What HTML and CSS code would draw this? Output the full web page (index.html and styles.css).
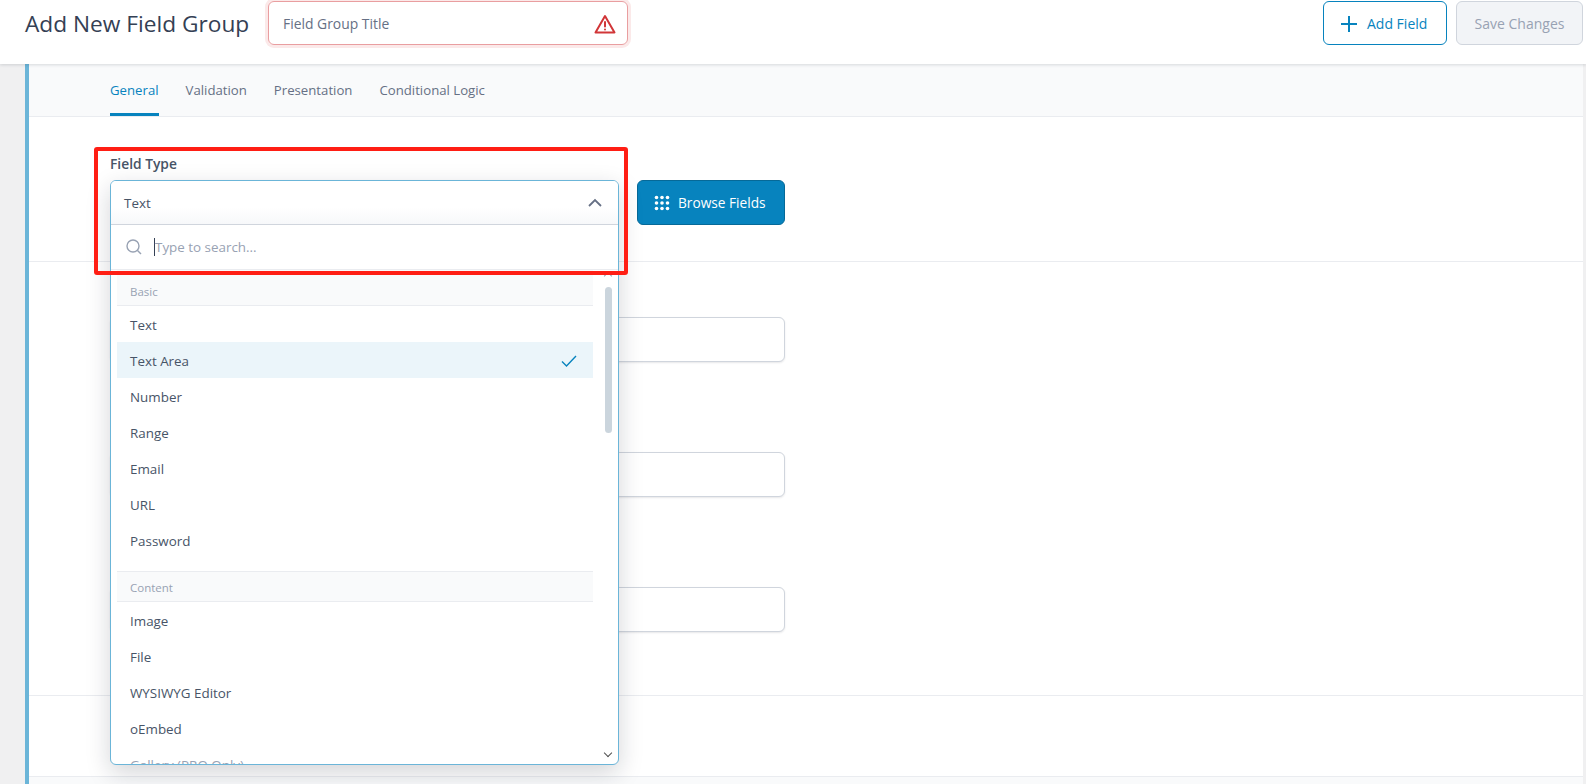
FILE: index.html
```html
<!DOCTYPE html>
<html lang="en">
<head>
    <meta charset="UTF-8">
    <title>Add New Field Group</title>
    <link rel="stylesheet" href="styles.css">
</head>
<body>
    <header class="topbar">
        <h1 class="page-title">Add New Field Group</h1>
        <div class="title-input">
            <span>Field Group Title</span>
            <svg width="22" height="20" viewBox="0 0 22 20" fill="none" stroke="#d13638" stroke-width="2" stroke-linejoin="round" stroke-linecap="round"><path d="M11 2 L20.5 18.5 H1.5 Z"/><path d="M11 8 V12.5"/><path d="M11 15.4 V15.5"/></svg>
        </div>
        <div class="top-actions">
            <button class="btn-outline"><svg width="16" height="16" viewBox="0 0 16 16" stroke="#0783be" stroke-width="2"><path d="M8 0 V16 M0 8 H16"/></svg>Add Field</button>
            <button class="btn-disabled">Save Changes</button>
        </div>
    </header>
    <div class="wrap">
        <div class="panel">
            <nav class="tabs">
                <a class="active">General</a>
                <a>Validation</a>
                <a>Presentation</a>
                <a>Conditional Logic</a>
            </nav>
            <section class="section type-section">
                <label class="field-label">Field Type</label>
                <div class="type-row">
                    <div class="fake-select"></div>
                    <button class="btn-browse">
                        <svg width="16" height="16" viewBox="0 0 16 16" fill="#fff"><circle cx="2.5" cy="2.5" r="1.8"/><circle cx="8" cy="2.5" r="1.8"/><circle cx="13.5" cy="2.5" r="1.8"/><circle cx="2.5" cy="8" r="1.8"/><circle cx="8" cy="8" r="1.8"/><circle cx="13.5" cy="8" r="1.8"/><circle cx="2.5" cy="13.5" r="1.8"/><circle cx="8" cy="13.5" r="1.8"/><circle cx="13.5" cy="13.5" r="1.8"/></svg>
                        Browse Fields
                    </button>
                </div>
            </section>
            <section class="section inputs-section">
                <div class="input-box"></div>
                <div class="input-box"></div>
                <div class="input-box"></div>
            </section>
            <section class="section last-section"></section>
            <div class="panel-foot"></div>
        </div>
    </div>

    <div class="dropdown">
        <div class="dd-head">
            <span>Text</span>
            <svg width="14" height="9" viewBox="0 0 14 9" fill="none" stroke="#667085" stroke-width="1.8"><path d="M1 8 L7 2 L13 8"/></svg>
        </div>
        <div class="dd-search">
            <svg width="16" height="16" viewBox="0 0 16 16" fill="none" stroke="#98a2b3" stroke-width="1.4"><circle cx="7" cy="7" r="6"/><path d="M11.5 11.5 L15 15"/></svg>
            <i class="caret"></i>
            <span>Type to search...</span>
        </div>
        <div class="dd-list">
            <div class="group-name">Basic</div>
            <div class="opt">Text</div>
            <div class="opt selected">Text Area
                <svg width="16" height="12" viewBox="0 0 16 12" fill="none" stroke="#0783be" stroke-width="1.4"><path d="M1 6.5 L5.5 11 L15 1"/></svg>
            </div>
            <div class="opt">Number</div>
            <div class="opt">Range</div>
            <div class="opt">Email</div>
            <div class="opt">URL</div>
            <div class="opt">Password</div>
            <div class="group-name second">Content</div>
            <div class="opt">Image</div>
            <div class="opt">File</div>
            <div class="opt">WYSIWYG Editor</div>
            <div class="opt">oEmbed</div>
            <div class="opt muted">Gallery (PRO Only)</div>
            <div class="scroll-up"></div>
            <div class="scroll-thumb"></div>
            <div class="scroll-down"></div>
        </div>
    </div>
    <div class="red-box"></div>
</body>
</html>
```
FILE: styles.css
```css
* {
    box-sizing: border-box;
}

html, body {
    height: 100%;
}

body {
    margin: 0;
    overflow: hidden;
    background-color: #f0f0f1;
    font-family: "Open Sans", "Noto Sans", sans-serif;
    font-size: 13.4px;
    color: #475467;
    position: relative;
}

.topbar {
    height: 64px;
    background-color: #fff;
    display: flex;
    align-items: flex-start;
    padding: 1px 3px 0 25px;
    box-shadow: 0 1px 3px rgba(16, 24, 40, 0.15);
    position: relative;
    z-index: 2;
}

.page-title {
    width: 243px;
    margin: 7px 0 0 0;
    font-size: 22.7px;
    font-weight: 400;
    line-height: 32px;
    color: #344054;
    white-space: nowrap;
}

.title-input {
    width: 360px;
    height: 44px;
    padding: 1px 11px 0 14px;
    display: flex;
    align-items: center;
    justify-content: space-between;
    border: 1px solid #e99ea0;
    border-radius: 6px;
    box-shadow: 0 0 0 3px #fbe9e9;
    font-size: 13.9px;
    color: #667085;
}

.top-actions {
    margin-left: auto;
    display: flex;
    gap: 9px;
}

.btn-outline, .btn-disabled, .btn-browse {
    height: 44px;
    border-radius: 6px;
    font-family: inherit;
    font-size: 14px;
    display: flex;
    align-items: center;
}

.btn-outline {
    width: 124px;
    padding: 1px 0 0 17px;
    gap: 10px;
    color: #0783be;
    background-color: #fff;
    border: 1px solid #0783be;
}

.btn-disabled {
    width: 127px;
    justify-content: center;
    padding: 1px 0 0 0;
    color: #98a2b3;
    background-color: #f2f4f7;
    border: 1px solid #d0d5dd;
}

.wrap {
    padding: 0 3px 0 25px;
    height: 720px;
}

.panel {
    height: 100%;
    background-color: #fff;
    border-left: 4px solid #6bb5d8;
    display: flex;
    flex-direction: column;
}

.tabs {
    height: 53px;
    flex-shrink: 0;
    display: flex;
    gap: 27px;
    padding-left: 81px;
    font-size: 13.2px;
    background-color: #f9fafb;
    border-bottom: 1px solid #eaecf0;
}

.tabs a {
    height: 52px;
    line-height: 52px;
    color: #667085;
}

.tabs a.active {
    color: #0783be;
    border-bottom: 3px solid #0783be;
}

.section {
    border-bottom: 1px solid #eaecf0;
}

.type-section {
    height: 145px;
    padding: 37px 0 0 81px;
}

.field-label {
    display: block;
    font-size: 13.8px;
    font-weight: 600;
    line-height: 20px;
    margin-bottom: 6px;
}

.type-row {
    display: flex;
    gap: 18px;
}

.fake-select {
    width: 509px;
}

.btn-browse {
    width: 148px;
    height: 45px;
    gap: 8px;
    padding: 0 0 0 16px;
    font-size: 13.7px;
    font-weight: 500;
    color: #fff;
    background-color: #0783be;
    border: 1px solid #066998;
}

.inputs-section {
    height: 434px;
    padding: 55px 0 0 81px;
}

.input-box {
    width: 675px;
    height: 45px;
    margin-bottom: 90px;
    background-color: #fff;
    border: 1px solid #d0d5dd;
    border-radius: 6px;
    box-shadow: 0 1px 2px rgba(16, 24, 40, 0.1);
}

.last-section {
    height: 81px;
    border-bottom: 1px solid #eaecf0;
    flex-shrink: 0;
}

.panel-foot {
    flex: 1;
    background-color: #f9fafb;
}

/* select2 dropdown sits over the form */
.dropdown {
    position: absolute;
    left: 110px;
    top: 180px;
    width: 509px;
    height: 585px;
    background-color: #fff;
    border: 1px solid #6bb5d8;
    border-radius: 6px;
    box-shadow: 0 8px 24px rgba(16, 24, 40, 0.18);
    display: flex;
    flex-direction: column;
    overflow: hidden;
    z-index: 3;
}

.dd-head {
    height: 44px;
    flex-shrink: 0;
    padding: 0 16px 0 13px;
    display: flex;
    align-items: center;
    justify-content: space-between;
    background: linear-gradient(#fff 60%, #f7f8fa);
    border-bottom: 1px solid #d0d5dd;
}

.dd-search {
    height: 45px;
    flex-shrink: 0;
    padding-left: 15px;
    display: flex;
    align-items: center;
    border-bottom: 1px solid #eaecf0;
    color: #98a2b3;
}

.dd-search .caret {
    width: 1px;
    height: 18px;
    margin: 0 0 0 12px;
    background-color: #344054;
}

.dd-list {
    flex: 1;
    position: relative;
    padding: 0 25px 0 6px;
    overflow: hidden;
}

.group-name {
    height: 36px;
    padding: 9px 13px 0;
    line-height: 25px;
    font-size: 11.5px;
    color: #98a2b3;
    background-color: #f9fafb;
    border-bottom: 1px solid #eaecf0;
}

.group-name.second {
    height: 31px;
    margin-top: 13px;
    padding-top: 1px;
    line-height: 29px;
    border-top: 1px solid #eaecf0;
}

.opt {
    height: 36px;
    padding: 1px 16px 0 13px;
    display: flex;
    align-items: center;
    justify-content: space-between;
}

.opt.selected {
    background-color: #ebf5fa;
}

.opt.muted {
    color: #98a2b3;
}

.scroll-thumb {
    position: absolute;
    top: 17px;
    right: 6px;
    width: 7px;
    height: 146px;
    border-radius: 4px;
    background-color: #cbd5dd;
}

.scroll-up, .scroll-down {
    position: absolute;
    right: 7px;
    width: 6px;
    height: 6px;
    border-left: 1.5px solid #98a2b3;
    border-top: 1.5px solid #98a2b3;
}

.scroll-up {
    top: 3px;
    transform: rotate(45deg);
}

.scroll-down {
    bottom: 8px;
    border-color: #505050;
    transform: rotate(225deg);
}

.red-box {
    position: absolute;
    left: 94px;
    top: 147px;
    width: 534px;
    height: 128px;
    border: 4px solid #ff1e14;
    border-radius: 3px;
    z-index: 4;
}
```
